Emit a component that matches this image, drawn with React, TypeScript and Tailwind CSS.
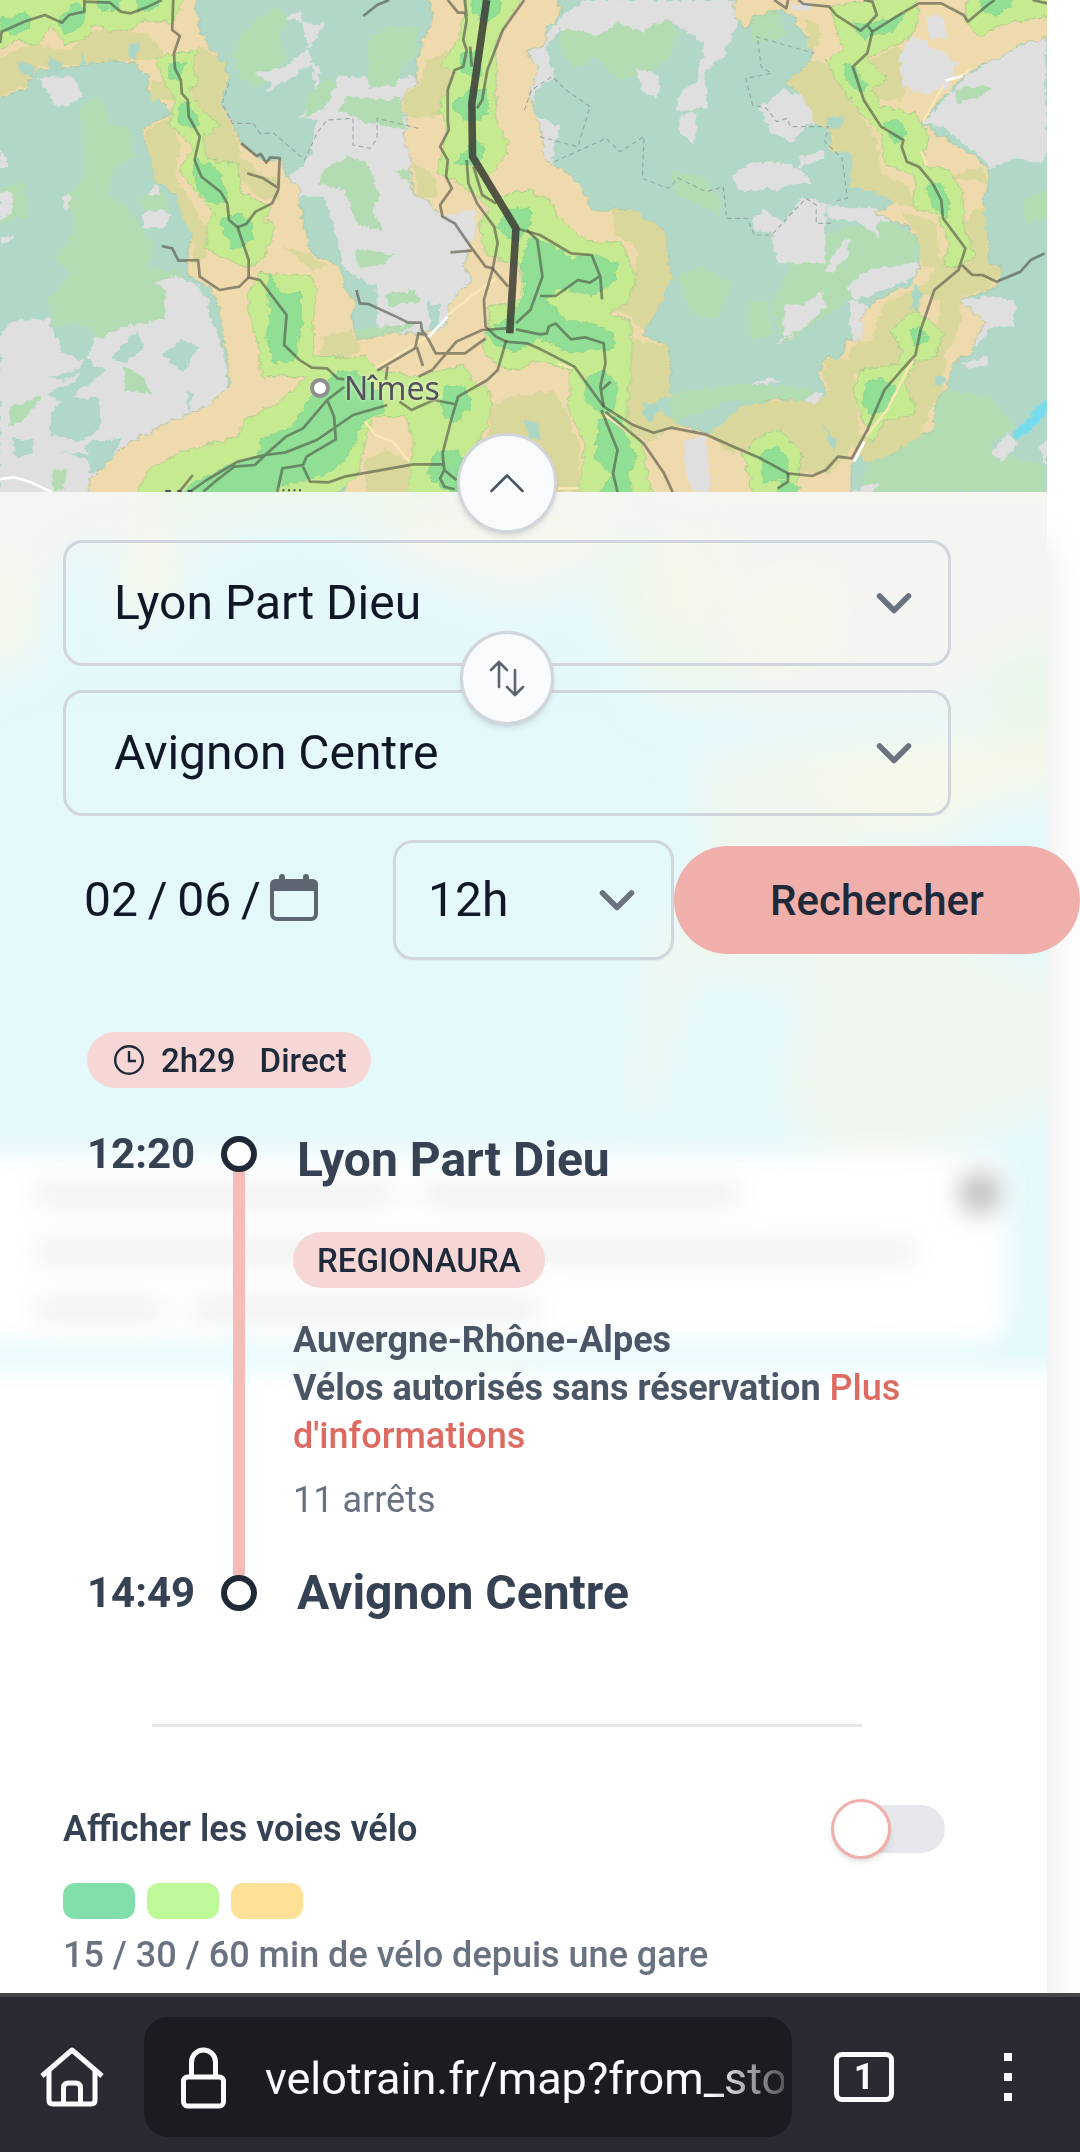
import React from "react";

function Chevron() {
  return (
    <svg className="pointer-events-none absolute right-9 top-1/2 h-10 w-10 -translate-y-1/2" viewBox="0 0 40 40" fill="none" stroke="#6b7280" strokeWidth="5.500" strokeLinecap="round" strokeLinejoin="round" aria-hidden="true">
      <path d="M4.500 13l14.500 14.500L33.500 13" />
    </svg>
  );
}

function RegionMap() {
  return (
    <svg className="block h-full w-full" viewBox="0 0 3040 1476" preserveAspectRatio="none" aria-hidden="true">
      <defs>
        <filter id="rough" x="-5%" y="-5%" width="110%" height="110%">
          <feTurbulence type="fractalNoise" baseFrequency="0.045" numOctaves="3" seed="4" result="n" />
          <feDisplacementMap in="SourceGraphic" in2="n" scale="24" xChannelSelector="R" yChannelSelector="G" />
        </filter>
      </defs>
      <rect width="3040" height="1476" fill="#b1d8c6" />
      <g filter="url(#rough)">
        {/* woodland */}
        <g fill="#b4dcb3">
          <path d="M680 130l60-70 60-40 40 30-30 60 20 60-40 70-60 20-50-60zM230 320l60-30 30 80 60 20 10 80-60 40-20 70 60 40 80 120-30 60 110 20-10 130-60 50 10 90-110-20-70 20-10-90-60-40-60 30-20-90 60-80-40-50 60-80-30-100 60-60zM0 560l70-10 10 100-80 20z" />
          <path d="M390 600l80-30 20 60-60 20z" />
          <g transform="translate(1568 0)">
            <path d="M60 80l70-60 230 20 40 60-20 70-60 50-90 20-70-70-60 40-40-60zM380 510l90 20 60 80-10 40-60-40-70-30zM730 790l100-90 180-40 90 60-10 70-130 60-120 90-130 90-40-100zM400 830l70-30 90 50-50 110-70-20zM600 910l60-10 20 110-70 10zM380 1180l200-30 190 10 50 40-110 20-150-20-180 70zM1060 1250l120-80 130 20 70 90-80 60 90 40 80 20v76H930l20-100zM1400 600l72-30v80l-60 20zM610 30l70-10 40 90-100 20z" />
          </g>
        </g>
        {/* open land */}
        <g fill="#dfdfdf">
          <path d="M0 1000l30-35 110-10 40 100 60 30-20 60-90 40 60 20 60-50 60-40-60-40 30-60 100-40 100-20 0-80-30-30 60-20 60 30 30 40 10 60 30 70 20 90 0 90-70 60-110 50-80 50-60 20-70-20-100-10 120 30-10 60 10 80H0z" />
          <path d="M870 30l-40 30 90 10 20 0-20 50-90 80-90 20 50 30-20 30 110-70 30-20 20 20-10 80-50 60 50 10-20 110-60 60 30 60 70 0 40 130 20 90 90 50 10 120 40 60-10 70 80 0 120 40 60-50 80-90 10-70 20-60 10-60-20-50-60-20-60-50-40-90-30-160-20-60 20-90 40-30 10-100-30 50-30 70-20-60H980l-30 80-20 20z" />
          <path d="M110 235l100-10 30 70-40 20-35 10-20-40zM0 450l20 20 0 30-20 5zM0 580l35-10 5 70-40 20zM180 590l25-5-5 40-10 10zM440 560l20-5 0 30-25 0zM410 645l60-20 30 20-30 40-50 0zM0 715l45-10-40 30zM140 375l-5 15z" />
          <path d="M1530 150l60-50 50-60 60-40h430l15 60-40 100-60 60 10 100-90 15 10-60 50-30 20-120-70-40-40-30-70 40-70-30-50 40-120-20-40 60 20 90-50 30-10 80 80 30-30 150-50 40 50 60-20 170-30 20-130-120-60-120z" />
          <g transform="translate(1568 0)">
            <path d="M285 205l45 10 25 40-20 40-45-30zM405 350l45-20 5 50-10 50-40-30zM640 320l70-50 80 30 40 50-60 30-40 50-60-30zM550 530l70-45 110 5 60 60-50 0-60 20-100 0zM750 470l70-15 10 20-80 30zM835 615l60 10 80 0 90 40-90 0 10 50-60-50-90-10zM620 660l30-30 60 40 50-80 70 20-5 180-140 0-10-90-50-10zM870 740l25-30 0 50-45 60-20-10zM890 860l60-50 150-20 5 30-80 40-110 40zM710 910l50 10 60-50 10 50-70 70-50 20zM680 1030l60-30-40 30zM900 900l60 20 40 50-60 60-40-40zM615 1150l60-15 30 10-80 10zM770 1195l50-20-10 40-40-5zM1050 80l40-50 80 50 60 110-40 90-130-20-20-50zM1110 370l80-90 60-60 80-50 140-70v390l-100-10-60 20-80-70-60-50zM1210 900l90-10 80 10-5 80-60 0-70 80 0-70 20-40zM1220 1090l80-20 0 30-60 10zM1310 1350l50-50 30 30-50 60zM910 1476l30-20 50-10-20 30zM1450 1340l22-20v90z" />
          </g>
        </g>
        <g fill="#b4dcb3">
          <path d="M1070 110l60-30 80 0 0 80-50 50-10 50-80 0zM1010 290l120 10 30-10 20 100-110-20-90-40zM890 300l60-70 30 30-60 80-30 10zM950 500l60-30 60 20 30 100-20 40 30 60-70-10-40-110-80-20zM1035 745l110 20-40 30-60 10zM1120 880l80-10 20 30-90 20zM1140 510l50 0 0 40zM30 1220l90-30-50 70-40 20zM360 1100l50 20 30 60-80-10zM150 1415l40-10 0 60-30 10zM1030 990l180-20-30 20-140 30z" />
          <path d="M2770 270l70-15 40 10-40 30-60 15z" />
        </g>
        <g fill="#b0d7ca">
          <path d="M320 1070l80-80 20 50-60 50zM140 1250l50-60 100 5 0 90-60 40-80-20zM250 1330l110-20-50 90-50 20zM470 1060l60-40 50 20-50 80zM35 1310l60 10 0 40-50 10zM540 1180l20 0-10 60zM140 1130l110-30-60 40zM1240 900l40 20 0 60-30 10z" />
        </g>
      </g>

      {/* one hour by bike */}
      <g filter="url(#rough)" stroke="#9fbf9c" strokeWidth="2">
        <path fill="#efdaad" d="M-20-20L560-20L580 90L600 130L650 190L665 240L640 310L690 400L700 430L760 480L820 480L830 530L870 560L870 620L890 700L900 760L990 800L1000 870L1030 900L1020 960L1040 1020L1120 1000L1220 1000L1290 980L1310 900L1370 840L1350 800L1360 750L1375 690L1350 640L1280 650L1240 600L1200 580L1190 480L1170 400L1190 380L1165 320L1170 280L1210 250L1210 180L1230 120L1260 50L1235-20L1618-20L1628 40L1588 90L1580 140L1530 150L1540 180L1568 200L1535 280L1573 400L1583 480L1648 520L1688 560L1718 630L1833 630L1928 690L1938 760L1948 830L1908 930L1868 1000L1938 1040L1948 1130L1938 1190L1868 1220L1988 1280L2058 1300L2118 1260L2138 1230L2248 1195L2368 1215L2398 1180L2378 1120L2398 1070L2438 1080L2458 1020L2498 1020L2498 950L2548 900L2648 850L2668 800L2678 740L2638 680L2538 640L2608 600L2598 560L2478 500L2488 430L2408 420L2418 380L2368 340L2358 300L2283 250L2348 190L2368 130L2318 90L2308 50L2268 30L2188 50L2168 90L2128 40L2138-20L3060-20L3060 110L2968 130L2898 175L2818 210L2748 280L2678 370L2718 400L2818 460L2873 510L2868 560L2848 640L2873 740L2868 790L2908 800L2898 860L2848 880L2778 900L2858 960L2818 1060L2778 1080L2748 1160L2718 1210L2708 1290L2648 1320L2588 1365L2508 1330L2473 1400L2473 1500L260 1500L260 1440L370 1330L480 1270L600 1220L670 1150L650 1040L640 940L610 860L545 830L540 790L560 700L530 640L520 590L450 540L440 480L410 390L500 340L430 270L430 230L390 190L320 180L170 210L110 210L70 270L-20 300z" />
      </g>
      <g filter="url(#rough)" fill="#d9d79c">
        <path d="M0 170l100-40 100 20 70-60 160 10 50 70-50 10-110 0-150 20-60 0-40 60-70 30zM580 130l70 60 10 50-25 70 50 90 15 70 70 60 40 0 0 70-60-10-60-60-90-30-50-90 40-30-40-120zM440 240l50 10 20 50-70 0zM420 390l80-40 20 90-10 90 60 100 40 70-10 60-40 40 0-90-30-60-20-70-60-40-20-90zM1240 180l60-30 10 90-40 110-90 0-10-60 50-40zM1195 480l60 40 20 70-60 0zM820 740l70 20 60 40-40 10zM940 1010l80-20 30 60-80 40-40-20zM1420 1230l60-40 130-20 30 60 40 100 0 146-260 0zM1060 1380l60-30 70 40-10 86h-120z" />
        <g transform="translate(1568 0)">
          <path d="M210 630l60 0 90 60 20 140-40 100-40 70-40-50-60-30 70-60 10-110-60-50zM270 1020l100 20 10 150-70 20 110 70-50 10-60 40-60-60 0-100zM490 1300l90-80 100-20 120 10 40-40-20-60 20-40 50 10 20-50 50-10 40-110 110-50 0 60-50 60-20 110-130 30 20 190-80 110-110 0-50-60-60-20-80 20zM720 240l80-60 60 30 30 70 50 80 40 70 10 90 80 40 10 60-40-10-80-40-60-10 10-100-70-10 10-50-60-40 0-30zM960 180l80-40 40 30-30 130-70 0-40-50zM1170 530l110-30 20 50-60-10zM1040 630l110 40 10 130-50 0-10-90zM1250 640l40-20 10 170 40 20-40 60-80 20 0 80-40 90-10 100-40 80-20 70-110 60-50 20-50-60 70-50 60-100 30-110 90-50 10-120-60-20zM770 60l40 10 0 70-30 10z" />
        </g>
      </g>
      <g filter="url(#rough)">
        <g fill="#dfdfdf">
          <path d="M2610 170l40-60 80 40 50 40-30 80-70 10-60-20zM2690 50l50 0 10 60-50 10zM2290 10l70 0-10 20-50 5zM1990 1320l60-10 10 80 0 90-50 0-25-80zM1290 645l90-15 0 60-20 60-30-80z" />
          <path d="M2500 950l10 70-30 0z" />
        </g>
        <g fill="#abd6c6">
          <path d="M50 185l50 10 0 40-30-10zM140 165l40 30-10 30-30-10zM230 150l20 40-15 10zM375 130l35-5-20 60-20-20zM2390 1275l40 50-10 30zM1868 1210l50 10-30 50-20-20zM2400 350l50-5-10 40-30 5zM2655 850l20 30-10 60-20-20zM2715 1130l30-5 0 30-35 0zM1520 1260l50 10 0 50-30 0zM940 1460l70 0-5 16h-60z" />
        </g>
        <path fill="#76dcec" d="M2940 1300l50-50 50-55v50l-50 45-40 30z" />
      </g>

      {/* half an hour by bike */}
      <g filter="url(#rough)" fill="#c6ea90" stroke="#9bc48a" strokeWidth="2">
        <path d="M-20-20L540-20L500 70L420 60L380 90L320 95L270 75L250 110L190 135L150 80L100 140L60 120L-20 160z" />
        <path d="M500 160L575 150L560 200L575 240L545 280L600 340L640 375L590 410L600 480L690 490L700 580L790 620L770 660L795 680L770 770L720 805L600 750L600 680L620 640L560 560L520 510L560 440L490 370L510 300L480 250L450 180z" />
        <path d="M720 880L750 820L850 825L900 830L920 860L910 960L910 1070L1060 1070L1100 1110L1200 1130L1350 1095L1370 1140L1420 1170L1430 1220L1410 1280L1380 1350L1400 1400L1470 1500L1180 1500L1200 1330L1180 1250L1080 1250L1060 1330L1040 1420L960 1500L380 1500L440 1400L540 1350L690 1310L710 1260L820 1200L890 1130L760 1130L750 1040L725 950z" />
        <path d="M1350-20L1520-20L1440 130L1440 270L1440 360L1475 430L1460 480L1410 540L1440 590L1530 570L1598 600L1618 650L1698 720L1808 730L1848 830L1828 900L1768 940L1828 960L1838 1050L1828 1150L1818 1260L1868 1340L1878 1420L1898 1500L1678 1500L1698 1330L1648 1230L1658 1110L1568 1080L1510 1110L1450 1100L1400 1050L1420 980L1420 920L1520 900L1510 800L1410 760L1390 680L1420 620L1320 540L1270 520L1300 370L1270 330L1320 220L1280 200L1340 100z" />
        <g transform="translate(1568 0)">
          <path d="M840 20L1090-20L1100 60L1070 120L1000 150L950 180L1010 240L960 270L990 320L1090 340L1130 410L1110 500L1190 510L1230 580L1230 680L1265 770L1220 800L1170 800L1190 730L1150 640L1080 620L1090 530L1000 490L990 400L930 340L860 240L830 180L880 150z" />
          <path d="M1240-20L1492-20L1492 50L1350 70L1270 110L1235 60z" />
          <path d="M1090 930L1175 1000L1140 1080L1090 1080L1060 1150L1090 1240L1000 1265L960 1330L910 1170L930 1110L1040 1090L1050 1050L1020 990zM640 1310L700 1290L760 1360L740 1500L620 1500L590 1360z" />
        </g>
      </g>

      {/* a quarter of an hour by bike */}
      <g filter="url(#rough)" fill="#90df94" stroke="#84cf90" strokeWidth="2">
        <path d="M0 60l80-25 10 50-50 20-40-10zM170 60l50-50 30 20-10 50-50 20zM270-20h80l0 50-60 0zM400-20h50l10 40-60 20zM490 190l50 0-20 50-30-10zM520 310l30 0 30 60-20 20-40-20zM565 480l60 20 30 60 0 50-60-10-30-50zM690 640l40 30 10 50-60 30-30-50-10-40zM815 880l60 0 0 90-20 110-60 10-20-80 10-70-10-60 10-60zM980 1115l60 0 60 60 20 60-60 20-30 70-30 60-80 50-100 20-50 50-80-30-90 40H500l50-60 100-50 100-40 10-50 80-30 60-90zM1290 1160l60 0 20 60-50 50-40-30zM1270 1350l60 0 30 60 10 80-80-20-50-50zM1370-20h80l0 60-40 30-40-40zM1340 160l50-10 10 80-20 10-40-30zM1370 260l40 10 10 70-50 30-60-50zM1380 420l30 30-30 50-60-10zM1480 630l60-10 0 50-40 60-60-50z" />
        <path d="M1540 710l60 20 60 50 70-15 60 30 0 50-70 40-100-20-30 40 60 60 50 0 80 30 0 50-120 10-100-40-60 40-60-20-30-40 50-30 70-80-20-90z" />
        <g transform="translate(1568 0)">
          <path d="M140 1130l50-20 30 40 0 80-40 10-50-40zM170 1260l60-10 20 60 30 60-20 50 10 70H160l50-60-50-50zM640 1360l50-20 30 30 0 60-70 20zM700 1440l60 20-20 30h-50zM945 1150l40-20 50 30-20 60-50 30-30-40zM1075 990l30-10 30 40-50 20zM1120 560l40-15 30 60-10 50-40-30zM995 370l50-10 20 40-30 30zM885 190l25 10 40 60-20 20-40-40zM910 70l60 0 90-30-40 60-50 0-30 20zM1280-20h90l0 40-50 30-40-20z" />
        </g>
      </g>

      {/* motorways */}
      <g fill="none" strokeLinejoin="round">
        <path stroke="#ffffff" strokeWidth="8" d="M0 1437l40-5 50 15 60 29M1240 1015l60-65M2745 242l50-15M2480 1385l30-60" />
        <path stroke="#fbe7b6" strokeWidth="7" d="M1090 1105l150-95M1300 945l60-50 80-60M2680 365l60-110M2800 225l20-20M2690 495l-15-40M1060 1265l30 40 50 20 50 60M1620 1465h60M2515 1310l60-80 80-160M1620 1090l40 15M1750 1240l80 60" />
      </g>

      {/* department borders */}
      <path fill="none" stroke="#8f9898" strokeOpacity=".75" strokeWidth="3.5" strokeDasharray="14 10" d="M665 250l-20 60 30 60 60 0 20 30 40 0 90 80 35-80 30-40 75-5 0 80 50 10 20-30 0-60 120 30M1568 410l110 30 35-120-70-50-40-40-60 40-20 60M1610 485l150-70 40 40 70-45-5 125 75 30 30-30 80 40 50-15 10 95 60 0 20 50 50 0 100-110 30 20 0 55 40 0 10-10M2195 110l170 50M2200 120l10 80 30 20-75 15 20 80 40 10 30 40 30-10 10 25 110 0-10 45 20 20 30 30 15 120-40 10" />

      {/* railways */}
      <g fill="none" stroke="#4a4a40" strokeOpacity=".58" strokeWidth="8" strokeLinejoin="round">
        <path d="M0 130L5 95 70 65 130 45 180 68 200 45 245 35 245 0M245 5L320 8 350 35 380 40 430 20 470 0" />
        <path d="M503 0L500 90 522 108 505 160 508 205 525 240 528 280 545 300 548 350 580 410 565 480 585 530 640 575 660 610 665 660 690 682 722 780 722 832 755 840 832 945 825 1035 870 1080 905 1103 950 1105 980 1135 1000 1138" />
        <path d="M700 430L745 468 757 462 773 488 785 472 812 474 808 570 790 610 742 635 715 672 690 682M718 520L765 535 805 562M470 738L500 745 518 782 575 780 580 830 638 870 695 860 722 832" />
        <path d="M1035 870L1045 910 1070 912 1150 950 1185 968 1222 968 1225 990 1245 1020 1265 1060 1350 1060 1410 1015M1095 1112L1205 1045 1215 1000 1240 1005M1210 1040L1228 1098M1215 1130L1255 1110 1325 1025 1400 990 1470 985M1055 48L1095 15 1130 0" />
        <path d="M1300 0L1330 38 1350 38 1355 60 1345 120 1355 150 1345 200 1320 210 1300 270 1300 360 1303 390 1278 440 1300 480 1295 530 1312 565 1278 615 1285 650 1320 670 1370 745 1410 800 1430 805 1475 860M1308 757L1370 752M1522 0L1460 90 1415 210 1400 300 1385 325M1350 0L1355 50" />
        <path d="M1355 480L1360 550 1385 610 1435 680 1445 730 1430 810 1405 900 1410 980 1440 1010 1470 1025 1530 1030 1570 1048 1668 1100 1753 1220 1838 1275 1898 1298 1948 1283 2048 1303 2118 1335 2208 1375 2288 1420 2358 1428 2398 1410 2433 1370 2473 1375 2518 1290 2568 1170 2618 1110 2658 1065 2673 990 2713 870 2783 810 2803 745 2738 655 2733 600 2708 550 2668 500 2633 485 2618 440 2623 420 2558 380 2508 300 2476 200 2518 160 2533 95 2618 40 2668 10 2733 10 2798 45 2810 65 2868 15 2888 0" />
        <path d="M1365 140L1370 200M1375 500L1400 585 1440 610M1498 685L1568 705 1658 760 1718 765 1743 830 1748 898M1743 828L1713 848 1678 840 1613 888 1568 888M1470 1020L1445 1110 1415 1140 1330 1190 1310 1260 1285 1360 1290 1410 1325 1440M1290 1410L1278 1435 1290 1460 1320 1468" />
        <path d="M1000 1160L950 1200 880 1285 830 1310 770 1365 740 1395 680 1400 630 1440 590 1475M950 1200L970 1250 975 1318 890 1370 880 1395 820 1405 805 1476M1125 1215L1025 1245 920 1320 830 1357 770 1365 690 1385 600 1440 550 1476M880 1400L900 1445 955 1447 1000 1430 1200 1393 1285 1393M1125 1100L1120 1140M1160 1205L1195 1230 1260 1200 1320 1212M560 1425L520 1476" />
        <path d="M1498 988L1568 1003 1588 1000 1593 980 1613 970 1658 1018 1698 1012 1753 1030 1758 1090 1743 1160 1753 1220M1746 1170L1773 1145M1746 1230L1793 1350 1780 1420 1793 1476M1758 1235L1868 1330 1928 1420 1953 1476M1530 690L1560 720 1575 830 1540 930 1498 970" />
        <path d="M2248 0L2283 25 2288 0M2318 0L2333 12 2408 20 2428 45 2498 92 2518 75 2533 95M2508 0L2533 5 2546 45 2518 75M2288 1420L2288 1445 2258 1465M2793 795L2823 825 2853 825 2893 845 2963 815 2993 780 3033 760M2998 0L3040 10" />
      </g>
      <path d="M1413 0L1370 310 1372 470 1498 685 1480 1000" fill="none" stroke="#3c3c35" strokeOpacity=".86" strokeWidth="22" strokeLinejoin="round" />
      <path d="M480 1473h16M515 1473h12M545 1473h14M820 1471h6M836 1471h6M852 1471h6M868 1471h6" stroke="#4d4d55" strokeWidth="6" />
    </svg>
  );
}

function FrostedBackdrop() {
  return (
    <div className="pointer-events-none absolute inset-0 overflow-hidden" aria-hidden="true">
      <svg className="block h-[900px] w-full" viewBox="0 0 1047 900" preserveAspectRatio="none">
        <defs>
          <filter id="soft" filterUnits="userSpaceOnUse" x="-100" y="-100" width="1247" height="1100">
            <feGaussianBlur stdDeviation="20" />
          </filter>
          <filter id="soft2" filterUnits="userSpaceOnUse" x="-100" y="500" width="1247" height="500">
            <feGaussianBlur stdDeviation="13" />
          </filter>
          <linearGradient id="sea" x1="0" y1="0" x2="0" y2="1">
            <stop offset="0" stopColor="#e4f8fc" />
            <stop offset=".96" stopColor="#e4f9fb" />
            <stop offset="1" stopColor="#ffffff" />
          </linearGradient>
        </defs>
        <rect width="1047" height="896" fill="url(#sea)" />
        <g filter="url(#soft)">
          <path fill="#f5f5f3" d="M-80-80H1120V30L800 50 600 40 400 50 300 20 200 50 80 50 30 120-80 180z" />
          <path fill="#f6f8ec" d="M-80 90L40 80 40 160-80 210zM130 40l40 0 20 50-50 50-30-40z" />
          <path fill="#edf7ec" d="M150-30h300v60H150zM600 60l120-20 90 30-30 140-120 0-60-90z" />
          <path fill="#f5f7ef" d="M380 20h260l-60 70-60 20-130-40z" />
          <path fill="#f4f5f2" d="M720 0H1120V190L960 210 760 220 710 150z" />
          <path fill="#f6f8ea" d="M650 50l60 0 10 70-60 30zM750 100l80-10-10 70-70 10zM750 260l220-20 150-80v130l-130 20-60 40-120-10z" />
          <path fill="#e9f6ea" d="M980 170l140-40v80l-120 50z" />
          <path fill="#f1f7ee" d="M700 260l120 20 40 60-10 60-80 90-80-20 20-110z" />
          <path fill="#f1f7ee" d="M800 440l130-10 60 30 130 60v70l-150 50-60 60-20 90-30-10-20-90-60-90 20-50z" />
          <path fill="#f1f8ef" d="M660 420l40 30-50 170-20 10z" />
          <path fill="#f4f8ee" d="M310 866h220v14H310z" />
        </g>
        <g filter="url(#soft2)">
          <rect x="-60" y="662" width="1068" height="190" rx="28" fill="#ffffff" />
        </g>
        <g filter="url(#soft2)" fill="none" stroke="#f0f0f0" strokeWidth="24">
          <path d="M35 702h360M420 702h320M35 760h880M35 818h130M190 818h350" />
        </g>
        <g filter="url(#soft2)">
          <circle cx="980" cy="701" r="20" fill="#b8b8b8" />
        </g>
      </svg>
    </div>
  );
}

function Stop() {
  return <span className="relative z-10 block h-9 w-9 rounded-full border-6 border-[#1f2937] bg-white" />;
}

export default function App() {
  return (
    <div className="flex min-h-screen flex-col overflow-x-hidden bg-white font-['Roboto',sans-serif] text-gray-700">
      <div className="relative mr-[33px] h-[492px] shrink-0 overflow-hidden">
        <RegionMap />
        <span className="absolute left-[310px] top-[378px] h-5 w-5 rounded-full border-4 border-[#8f8f8f] bg-white" />
        <span className="absolute left-[344px] top-[368px] font-['Noto_Sans',sans-serif] text-[32px] leading-[40px] text-[#55525c] [text-shadow:0_0_4px_#ffffffb0]">
          Nîmes
        </span>
      </div>

      <main className="relative mr-[33px] flex-1 bg-white pb-2 pl-[63px] pr-24 pt-12 shadow-[0_50px_40px_rgba(0,0,0,0.1)]">
        <FrostedBackdrop />
        <div className="relative">
          <button type="button" aria-label="Replier le panneau" className="absolute -top-[107px] left-1/2 z-20 flex h-[100px] w-[100px] -translate-x-1/2 items-center justify-center rounded-full border-3 border-gray-300 bg-gray-50 shadow-md">
            <svg width="40" height="40" viewBox="0 0 40 40" fill="none" stroke="#4b5563" strokeWidth="2.6" strokeLinecap="round" strokeLinejoin="round">
              <path d="M4.500 28L20 12.500 35.500 28" />
            </svg>
          </button>

          <form onSubmit={(e) => e.preventDefault()}>
            <div className="relative flex flex-col gap-6">
              <div className="relative">
                <select aria-label="Départ" className="h-[126px] w-full appearance-none rounded-[20px] border-3 border-gray-300 bg-transparent px-12 text-[48px] text-gray-900">
                  <option>Lyon Part Dieu</option>
                </select>
                <Chevron />
              </div>
              <button type="button" aria-label="Inverser départ et arrivée" className="absolute left-1/2 top-1/2 z-10 flex h-[94px] w-[94px] -translate-x-1/2 -translate-y-1/2 items-center justify-center rounded-full border-3 border-gray-300 bg-gray-50 shadow-md">
                <svg width="40" height="40" viewBox="0 0 40 40" fill="none" stroke="#5b6470" strokeWidth="2.6" strokeLinecap="round" strokeLinejoin="round">
                  <path d="M12 29V4M4 12l8-8 8 8M28 12v25M20 29l8 8 8-8" />
                </svg>
              </button>
              <div className="relative">
                <select aria-label="Arrivée" className="h-[126px] w-full appearance-none rounded-[20px] border-3 border-gray-300 bg-transparent px-12 text-[48px] text-gray-900">
                  <option>Avignon Centre</option>
                </select>
                <Chevron />
              </div>
            </div>

            <div className="mt-6 flex items-center">
              <div className="flex w-[330px] shrink-0 items-center pl-[21px]">
                <input aria-label="Date" type="text" defaultValue={"02\u2009/\u200906\u2009/"} className="w-[184px] bg-transparent text-[48px] leading-[60px] text-gray-900 outline-none" />
                <button type="button" aria-label="Ouvrir le calendrier">
                  <svg width="52" height="52" viewBox="0 0 52 52" fill="none">
                    <rect x="4" y="7" width="44" height="38" rx="5" stroke="#5d6670" strokeWidth="4" />
                    <path d="M2 17v-6q0-6 6-6h36q6 0 6 6v6z" fill="#5d6670" />
                    <path d="M14 3v6M38 3v6" stroke="#5d6670" strokeWidth="6" strokeLinecap="round" />
                  </svg>
                </button>
              </div>
              <div className="relative w-[281px] shrink-0">
                <select aria-label="Heure" className="h-[120px] w-full appearance-none rounded-[20px] border-3 border-gray-300 bg-transparent px-8 text-[48px] text-gray-900 shadow-xs">
                  <option>12h</option>
                </select>
                <Chevron />
              </div>
              <button type="submit" className="h-[108px] w-[406px] shrink-0 rounded-full bg-[#f0afab] text-[42px] font-medium text-gray-800">
                Rechercher
              </button>
            </div>
          </form>

          <section className="mt-[72px] px-6">
            <div className="flex h-14 w-fit items-center rounded-full bg-[#f7d7d5] px-6 text-[33px] font-medium leading-none text-gray-800">
              <svg className="mr-4 ml-0.5" width="32" height="32" viewBox="0 0 32 32" fill="none" stroke="currentColor" strokeWidth="2.400">
                <circle cx="16" cy="16" r="13.800" />
                <path d="M16 7v10h7" />
              </svg>
              2h29
              <span className="ml-6">Direct</span>
            </div>

            <ol className="mt-12">
              <li className="grid grid-cols-[134px_36px_1fr]">
                <time className="text-[42px] font-bold leading-9">12:20</time>
                <div className="relative">
                  <Stop />
                  <span className="absolute bottom-0 left-3 top-6 w-3 bg-[#f5bcb8]" />
                </div>
                <div className="pb-[51px] pl-9">
                  <h2 className="pl-1 text-[48px] font-bold leading-[48px]">Lyon Part Dieu</h2>
                  <div className="mt-12 flex h-14 w-fit items-center rounded-full bg-[#f7d7d5] px-6 text-[33px] font-medium leading-none text-gray-800">
                    REGIONAURA
                  </div>
                  <p className="mt-7 text-[36px] font-bold leading-[48px] text-gray-600">
                    Auvergne-Rhône-Alpes
                    <br />
                    Vélos autorisés sans réservation{" "}
                    <a href="#informations" className="font-medium text-[#de6b62]">
                      Plus d'informations
                    </a>
                  </p>
                  <p className="mt-4 text-[36px] leading-[48px] text-gray-500">11 arrêts</p>
                </div>
              </li>
              <li className="grid grid-cols-[134px_36px_1fr]">
                <time className="text-[42px] font-bold leading-9">14:49</time>
                <Stop />
                <h2 className="pl-10 text-[48px] font-bold leading-9">Avignon Centre</h2>
              </li>
            </ol>
          </section>

          <hr className="mx-[89px] mt-[113px] border-t-3 border-gray-200" />

          <section className="mt-[78px]">
            <div className="flex items-center justify-between pr-1.5">
              <label htmlFor="bike-lanes" className="text-[36px] font-semibold leading-[48px]">
                Afficher les voies vélo
              </label>
              <input
                id="bike-lanes"
                type="checkbox"
                className="relative h-12 w-[112px] appearance-none rounded-full bg-gray-200 before:absolute before:-left-0.5 before:-top-1.5 before:h-[60px] before:w-[60px] before:rounded-full before:border-3 before:border-[#f0afab] before:bg-white before:shadow-md before:content-[''] checked:bg-[#f0afab] checked:before:left-14"
              />
            </div>
            <div className="mt-[30px] flex gap-3">
              <span className="h-9 w-[72px] rounded-xl bg-[#82dfac]" />
              <span className="h-9 w-[72px] rounded-xl bg-[#bdf999]" />
              <span className="h-9 w-[72px] rounded-xl bg-[#fee097]" />
            </div>
            <p className="mt-3 text-[36px] font-medium leading-[48px] text-gray-500">15 / 30 / 60 min de vélo depuis une gare</p>
          </section>
        </div>
      </main>

      <nav className="relative flex h-[159px] shrink-0 items-center border-t-4 border-[#43464a] bg-[#2b2a33] pt-1 text-[#fbfbfe]">
        <button type="button" aria-label="Accueil" className="flex w-36 shrink-0 justify-center">
          <svg width="66" height="66" viewBox="0 0 66 66" fill="none" stroke="currentColor" strokeWidth="5" strokeLinejoin="round">
            <path d="M3 32L33 6l30 26" />
            <path d="M10 27v29q0 4 4 4h38q4 0 4-4V27" />
            <path d="M24.500 60V44q0-5 5-5h7q5 0 5 5v16" />
          </svg>
        </button>
        <div className="flex h-[120px] min-w-0 flex-1 items-center rounded-3xl bg-[#1c1b22] pl-[35px] pr-2">
          <svg className="shrink-0" width="50" height="66" viewBox="0 0 50 66" fill="none" stroke="currentColor" strokeWidth="5">
            <rect x="4.500" y="33" width="40" height="29" rx="4" />
            <path d="M12.500 33V18a12 12 0 0 1 24 0v15" />
          </svg>
          <input
            aria-label="Adresse"
            type="text"
            readOnly
            value="velotrain.fr/map?from_sto"
            className="ml-9 mt-1 min-w-0 flex-1 bg-transparent text-[45px] leading-[60px] outline-none [mask-image:linear-gradient(to_right,#000_86%,#0004_100%)]"
          />
        </div>
        <button type="button" aria-label="Onglets" className="flex w-36 shrink-0 justify-center">
          <span className="flex h-[50px] w-[60px] items-center justify-center rounded-lg border-5 border-current text-[36px] font-bold leading-none">1</span>
        </button>
        <button type="button" aria-label="Menu" className="flex w-36 shrink-0 flex-col items-center gap-3">
          <span className="h-2 w-2 bg-current" />
          <span className="h-2 w-2 bg-current" />
          <span className="h-2 w-2 bg-current" />
        </button>
      </nav>
    </div>
  );
}
